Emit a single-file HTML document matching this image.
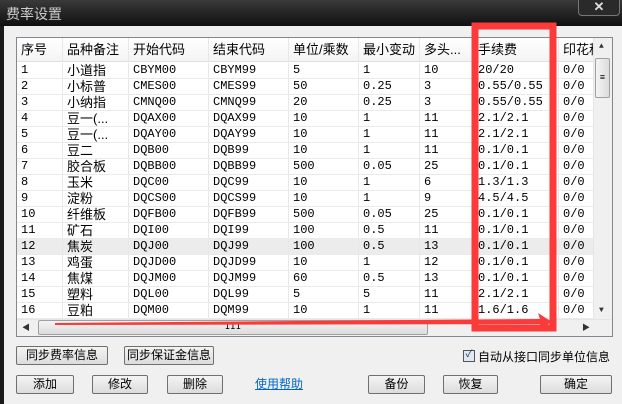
<!DOCTYPE html><html><head><meta charset="utf-8"><style>
*{margin:0;padding:0;box-sizing:border-box}
body{width:622px;height:404px;background:#1a1a1a;position:relative;overflow:hidden;font-family:"Liberation Mono","SimSun","Noto Sans CJK SC",monospace;font-size:12px;color:#000}
.abs{position:absolute}
.title{left:0;top:0;width:622px;height:26px;background:linear-gradient(#3a3a3a,#101010)}
.tt{left:6px;top:4px;color:#ccc;font-family:"Liberation Sans","Noto Sans CJK SC",sans-serif;font-size:14px}
.close{left:578px;top:-2px;width:42px;height:18px;border:1px solid #777;border-radius:0 0 4px 4px;background:#2a2a2a;color:#ddd;text-align:center;font:bold 13px "Liberation Sans",sans-serif;line-height:16px}
.dlg{left:4px;top:26px;width:618px;height:378px;background:#f0f0f0}
.tbl{left:16px;top:37px;width:597px;height:300px;border:1px solid #828790;background:#fff;overflow:hidden}
.hdr{left:0;top:0;height:24px;background:linear-gradient(#fff,#f4f4f4);border-bottom:1px solid #e0e0e0;width:600px}
.c{position:absolute;white-space:nowrap;overflow:hidden;padding-left:4px;border-right:1px solid #e8e8e8;height:100%}
.h .c{font-family:"Liberation Sans","Noto Sans CJK SC",sans-serif;font-size:13px;line-height:24px}
.r{position:absolute;left:0;width:576px;height:16px;border-bottom:1px solid #eaeaea;line-height:15px}
.r .cn{font-family:"Liberation Sans","Noto Sans CJK SC",sans-serif;font-size:13px}
.btn{position:absolute;height:19px;border:1px solid #707070;border-radius:2px;background:linear-gradient(#f4f4f4,#dcdcdc);font-family:"Liberation Sans","Noto Sans CJK SC",sans-serif;font-size:12px;text-align:center;line-height:17px;white-space:nowrap}
.lbl{font-family:"Liberation Sans","Noto Sans CJK SC",sans-serif;font-size:12px;white-space:nowrap}
</style></head><body>
<div class="abs title"></div><div class="abs tt">费率设置</div><div class="abs close">✕</div>
<div class="abs dlg"></div>
<div class="abs tbl">
<div class="abs hdr h" style="position:absolute">
<div class="c" style="left:0;width:46px">序号</div><div class="c" style="left:46px;width:66px">品种备注</div><div class="c" style="left:112px;width:80px">开始代码</div><div class="c" style="left:192px;width:80px">结束代码</div><div class="c" style="left:272px;width:70px">单位/乘数</div><div class="c" style="left:342px;width:61px">最小变动</div><div class="c" style="left:403px;width:54px">多头...</div><div class="c" style="left:457px;width:85px">手续费</div><div class="c" style="left:542px;width:40px">印花税</div>
</div>
<div id="rows"></div>
<div class="abs" style="left:576px;top:0;width:19px;height:281px;background:#f0f0f0;border-left:1px solid #e5e5e5"></div>
<div class="abs" style="left:582px;top:4px;font-size:8px;color:#333">▲</div>
<div class="abs" style="left:578px;top:20px;width:15px;height:40px;border:1px solid #a0a0a0;border-radius:2px;background:linear-gradient(90deg,#f4f4f4,#dcdcdc);font-size:9px;text-align:center;line-height:38px">≡</div>
<div class="abs" style="left:582px;top:268px;font-size:8px;color:#333">▼</div>
<div class="abs" style="left:0;top:281px;width:595px;height:18px;background:#f0f0f0;border-top:1px solid #e5e5e5"></div>
<div class="abs" style="left:5px;top:284px;font-size:8px;color:#333">◀</div>
<div class="abs" style="left:21px;top:282px;width:390px;height:15px;border:1px solid #a0a0a0;border-radius:2px;background:linear-gradient(#f4f4f4,#dcdcdc);font-size:9px;text-align:center;line-height:13px">III</div>
<div class="abs" style="left:565px;top:284px;font-size:8px;color:#333">▶</div>
</div>
<div class="btn" style="left:16px;top:346px;width:92px">同步费率信息</div>
<div class="btn" style="left:124px;top:346px;width:90px">同步保证金信息</div>
<div class="abs" style="left:463px;top:350px;width:12px;height:12px;border:1px solid #555;background:#dfe8f5;font-size:10px;line-height:10px;text-align:center;color:#235">✓</div>
<div class="abs lbl" style="left:478px;top:348px">自动从接口同步单位信息</div>
<div class="btn" style="left:16px;top:375px;width:58px">添加</div>
<div class="btn" style="left:92px;top:375px;width:56px">修改</div>
<div class="btn" style="left:167px;top:375px;width:56px">删除</div>
<div class="abs lbl" style="left:255px;top:375px;color:#0066cc;text-decoration:underline">使用帮助</div>
<div class="btn" style="left:368px;top:375px;width:57px">备份</div>
<div class="btn" style="left:443px;top:375px;width:55px">恢复</div>
<div class="btn" style="left:540px;top:375px;width:72px">确定</div>
<svg class="abs" style="left:0;top:0" width="622" height="404">
<rect x="475" y="26" width="78" height="302" fill="none" stroke="#fc3a3a" stroke-width="7"/>
<polygon points="55,323 540,319 538,313 552,322 538,330 540,324 55,325" fill="#fc3a3a"/>
</svg>
<script>
var d=[["1","小道指","CBYM00","CBYM99","5","1","10","20/20"],["2","小标普","CMES00","CMES99","50","0.25","3","0.55/0.55"],["3","小纳指","CMNQ00","CMNQ99","20","0.25","3","0.55/0.55"],["4","豆一(...","DQAX00","DQAX99","10","1","11","2.1/2.1"],["5","豆一(...","DQAY00","DQAY99","10","1","11","2.1/2.1"],["6","豆二","DQB00","DQB99","10","1","11","0.1/0.1"],["7","胶合板","DQBB00","DQBB99","500","0.05","25","0.1/0.1"],["8","玉米","DQC00","DQC99","10","1","6","1.3/1.3"],["9","淀粉","DQCS00","DQCS99","10","1","9","4.5/4.5"],["10","纤维板","DQFB00","DQFB99","500","0.05","25","0.1/0.1"],["11","矿石","DQI00","DQI99","100","0.5","11","0.1/0.1"],["12","焦炭","DQJ00","DQJ99","100","0.5","13","0.1/0.1"],["13","鸡蛋","DQJD00","DQJD99","10","1","12","0.1/0.1"],["14","焦煤","DQJM00","DQJM99","60","0.5","13","0.1/0.1"],["15","塑料","DQL00","DQL99","5","5","11","2.1/2.1"],["16","豆粕","DQM00","DQM99","10","1","11","1.6/1.6"]];
var L=[0,46,112,192,272,342,403,457,542],W=[46,66,80,80,70,61,54,85,40],h="";
d.forEach(function(r,i){r.push("0/0");h+='<div class="r" style="top:'+(25+i*16)+'px;'+(i==11?'background:#ececec':'')+'">';r.forEach(function(v,j){h+='<div class="c'+(j==1?' cn':'')+'" style="left:'+L[j]+'px;width:'+W[j]+'px">'+v+'</div>'});h+='</div>'});
document.getElementById("rows").innerHTML=h;
</script>
</body></html>
